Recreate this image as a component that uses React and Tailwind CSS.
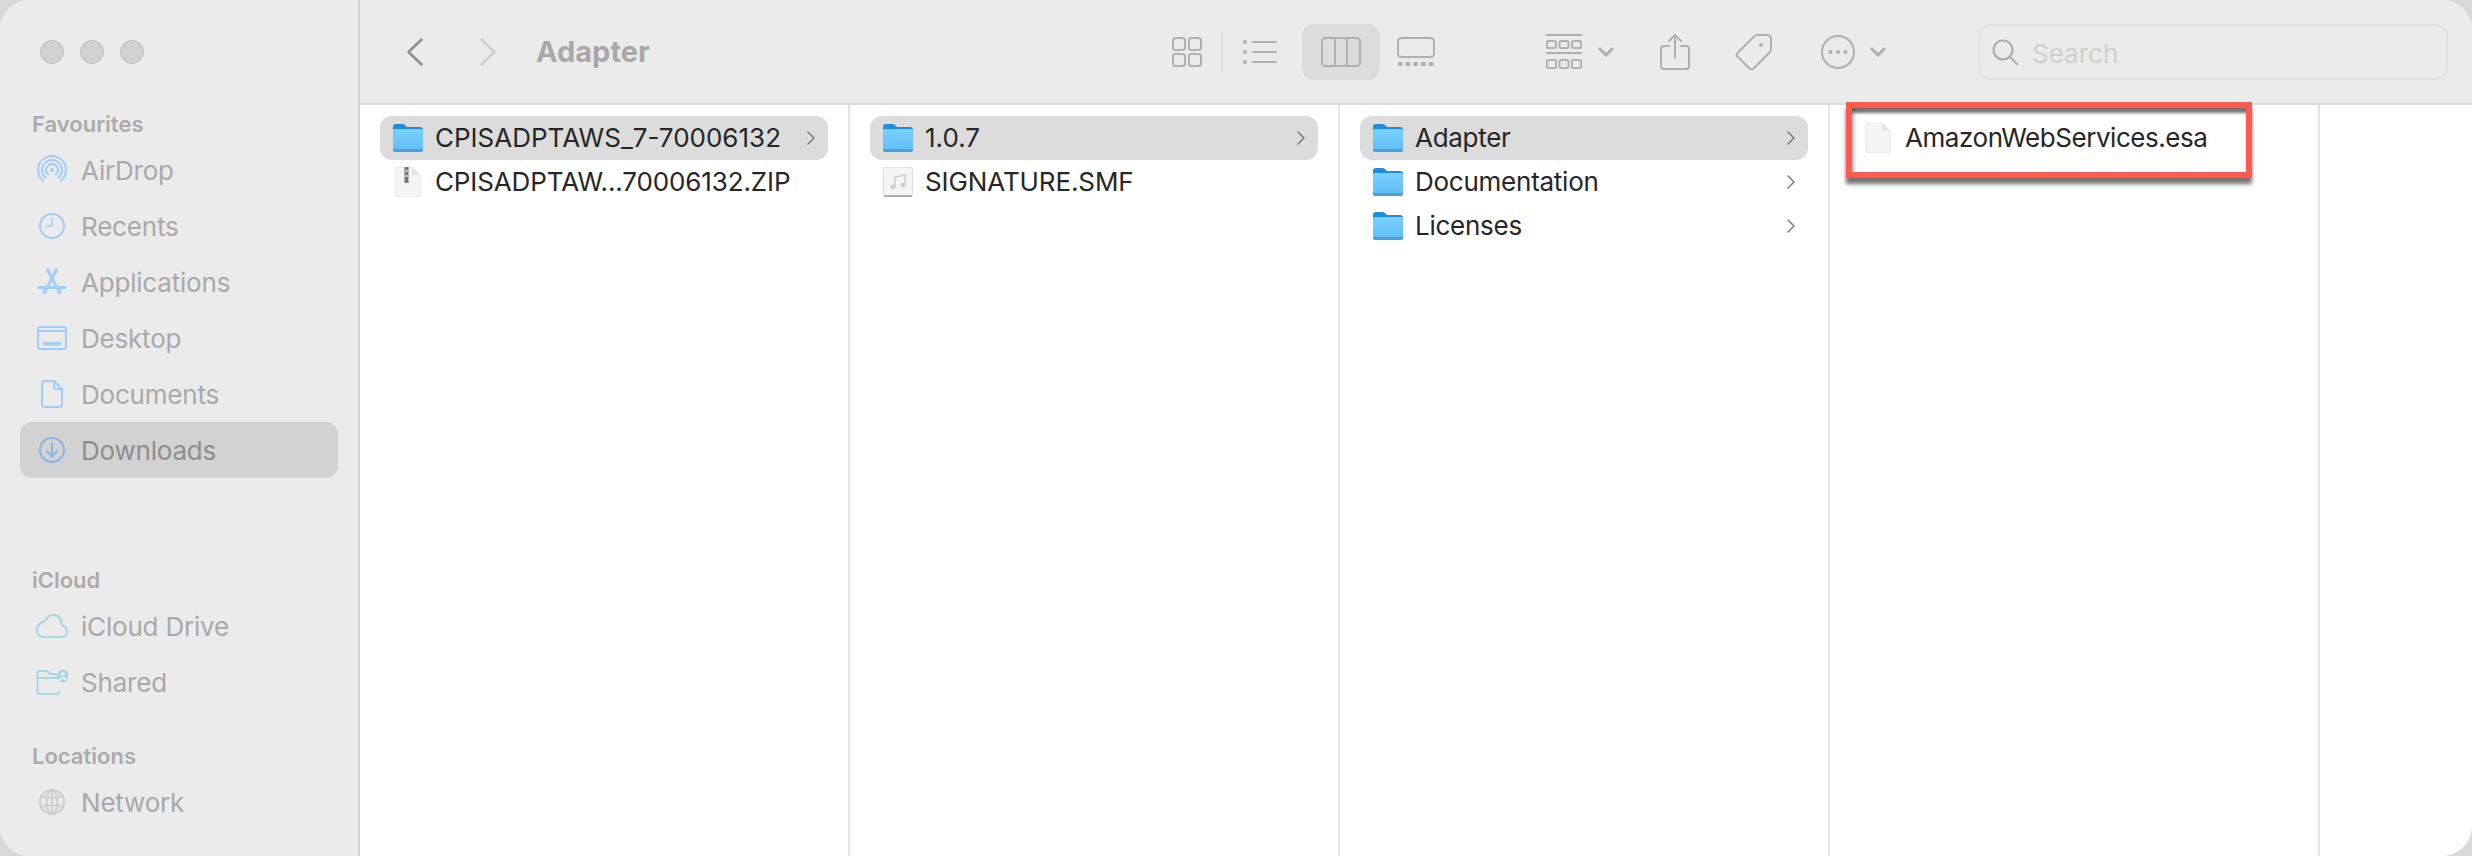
const font = { fontFamily: "Inter, 'Noto Sans', sans-serif" };

const Icon = ({ w = 32, h = 32, children, className = "", stroke = "currentColor", sw = 2 }) => (
  <svg width={w} height={h} viewBox={`0 0 ${w} ${h}`} fill="none" stroke={stroke} strokeWidth={sw} strokeLinecap="round" strokeLinejoin="round" className={`shrink-0 ${className}`}>
    {children}
  </svg>
);

const sidebarIcons = {
  airdrop: (
    <>
      <path d="M7 26.7A14 14 0 1 1 25 26.7" />
      <path d="M9.6 23.7A10 10 0 1 1 22.4 23.7" />
      <path d="M12.1 20.6A6 6 0 1 1 19.9 20.6" />
      <circle cx="16" cy="16" r="2" fill="currentColor" stroke="none" />
    </>
  ),
  recents: (
    <>
      <circle cx="16" cy="16" r="12" />
      <path d="M16 8.5V16H10" strokeWidth="1.5" />
    </>
  ),
  apps: (
    <>
      <path d="M11.5 3.5L23 25.5" strokeWidth="3" />
      <path d="M20.5 3.5L9 25.5" strokeWidth="3" />
      <path d="M3 21.5H29" strokeWidth="3" />
      <circle cx="8.5" cy="26" r="2" fill="currentColor" stroke="none" />
      <circle cx="23.5" cy="26" r="2" fill="currentColor" stroke="none" />
    </>
  ),
  desktop: (
    <>
      <rect x="2" y="5" width="28" height="22" rx="3" />
      <path d="M2 9H30" />
      <rect x="7" y="20" width="18" height="3.5" fill="currentColor" stroke="none" />
    </>
  ),
  documents: (
    <>
      <path d="M9 3H18L26 11V26Q26 29 23 29H9Q6 29 6 26V6Q6 3 9 3Z" />
      <path d="M18 3V9Q18 11 20 11H26" />
    </>
  ),
  downloads: (
    <>
      <circle cx="16" cy="16" r="12" />
      <path d="M16 9.5V22M11 17.5L16 22.5L21 17.5" />
    </>
  ),
  cloud: (
    <>
      <path d="M8 27H25Q31 27 31 21.5Q31 16.5 26 15.5Q25.5 5 17 5Q11.5 5 9.5 11Q1 13 1 20.5Q1 27 8 27Z" />
    </>
  ),
  shared: (
    <>
      <path d="M23 25.5V26Q23 28 21 28H3.5Q1.5 28 1.5 26V7Q1.5 5 3.5 5H10Q11 5 12 6L14 8H20M1.5 12H20" />
      <circle cx="27" cy="10" r="6.5" fill="currentColor" stroke="none" />
      <circle cx="27" cy="8" r="2" fill="#ebebeb" stroke="none" />
      <path d="M23.5 14Q27 10 30.5 14" stroke="#ebebeb" />
    </>
  ),
  network: (
    <>
      <circle cx="16" cy="16" r="12" />
      <ellipse cx="16" cy="16" rx="5.5" ry="12" />
      <path d="M5.5 10Q16 14 26.5 10M5 21Q16 17 27 21M16 4V28" />
    </>
  ),
};

const SidebarRow = ({ icon, label, selected, tint = "text-[#a3cdf9]" }) => (
  <div className={`flex h-[56px] items-center gap-[13px] rounded-[12px] pl-[16px] text-[26px] tracking-[-0.2px] ${selected ? "bg-[#d2d2d2] text-[#8e8e8e]" : "text-[#a9a9a9]"}`}>
    <Icon className={selected ? "text-[#80b7ee]" : tint}>{sidebarIcons[icon]}</Icon>
    <span>{label}</span>
  </div>
);

const SectionTitle = ({ children, className = "" }) => (
  <div className={`flex h-[36px] items-center pl-[12px] text-[22px] font-semibold text-[#ababab] ${className}`}>{children}</div>
);

function Sidebar() {
  return (
    <aside className="flex w-[360px] shrink-0 flex-col border-r-2 border-[#d4d4d4] bg-[#ebebeb] px-[20px]">
      <div className="mt-[40px] flex gap-[16px] pl-[20px]">
        <span className="h-[24px] w-[24px] rounded-full border border-[#bdbdbd] bg-[#d2d2d2]" />
        <span className="h-[24px] w-[24px] rounded-full border border-[#bdbdbd] bg-[#d2d2d2]" />
        <span className="h-[24px] w-[24px] rounded-full border border-[#bdbdbd] bg-[#d2d2d2]" />
      </div>
      <SectionTitle className="mt-[42px]">Favourites</SectionTitle>
      <SidebarRow icon="airdrop" label="AirDrop" />
      <SidebarRow icon="recents" label="Recents" />
      <SidebarRow icon="apps" label="Applications" />
      <SidebarRow icon="desktop" label="Desktop" />
      <SidebarRow icon="documents" label="Documents" />
      <SidebarRow icon="downloads" label="Downloads" selected />
      <SectionTitle className="mt-[84px]">iCloud</SectionTitle>
      <SidebarRow icon="cloud" label="iCloud Drive" tint="text-[#a5d8e2]" />
      <SidebarRow icon="shared" label="Shared" tint="text-[#a5d8e2]" />
      <SectionTitle className="mt-[28px]">Locations</SectionTitle>
      <SidebarRow icon="network" label="Network" tint="text-[#cfcfcf]" />
    </aside>
  );
}

const SmallChevron = ({ className = "" }) => (
  <Icon w={16} h={10} sw={3} className={className}>
    <path d="M2 2L8 8L14 2" />
  </Icon>
);

function Toolbar() {
  return (
    <header className="flex h-[105px] shrink-0 items-center border-b-2 border-[#dcdcdc] bg-[#ebebeb] pr-[24px] text-[#b0b0b0]">
      <Icon w={16} h={28} sw={2.5} className="ml-[47px] text-[#8f8f8f]">
        <path d="M14.5 1.5L1.5 14L14.5 26.5" />
      </Icon>
      <Icon w={16} h={28} sw={2.5} className="ml-[57px] text-[#cfcfcf]">
        <path d="M1.5 1.5L14.5 14L1.5 26.5" />
      </Icon>
      <span className="ml-[40px] text-[29px] font-bold text-[#a8a8a8]">Adapter</span>

      <div className="ml-auto flex items-center">
        <Icon w={30} h={30}>
          <rect x="1" y="1" width="12" height="12" rx="2.5" />
          <rect x="17" y="1" width="12" height="12" rx="2.5" />
          <rect x="1" y="17" width="12" height="12" rx="2.5" />
          <rect x="17" y="17" width="12" height="12" rx="2.5" />
        </Icon>
        <span className="ml-[19px] h-[40px] w-[2px] bg-[#dcdcdc]" />
        <Icon w={34} h={24} className="ml-[20px]">
          <circle cx="2" cy="2" r="2" fill="currentColor" stroke="none" />
          <circle cx="2" cy="12" r="2" fill="currentColor" stroke="none" />
          <circle cx="2" cy="22" r="2" fill="currentColor" stroke="none" />
          <path d="M10 2H33M10 12H33M10 22H33" />
        </Icon>
        <div className="ml-[25px] flex h-[56px] w-[78px] items-center justify-center rounded-[12px] bg-[#dcdcdc]">
          <Icon w={40} h={30}>
            <rect x="1" y="1" width="38" height="28" rx="3.5" />
            <path d="M14 1V29M26 1V29" />
          </Icon>
        </div>
        <Icon w={38} h={30} className="ml-[17px]">
          <rect x="1" y="1" width="36" height="19" rx="3.5" />
          <path d="M1 27H37" strokeWidth="4" strokeDasharray="4.5 3.2" strokeLinecap="butt" />
        </Icon>

        <Icon w={36} h={36} className="ml-[111px]">
          <path d="M0 1H36M0 19H36" />
          <rect x="1" y="7" width="9" height="7" rx="1.5" />
          <rect x="13.5" y="7" width="9" height="7" rx="1.5" />
          <rect x="26" y="7" width="9" height="7" rx="1.5" />
          <rect x="1" y="26" width="9" height="8" rx="1.5" />
          <rect x="13.5" y="26" width="9" height="8" rx="1.5" />
          <rect x="26" y="26" width="9" height="8" rx="1.5" />
        </Icon>
        <SmallChevron className="ml-[16px]" />
        <Icon w={30} h={38} className="ml-[46px]">
          <path d="M9 13H4Q1 13 1 16V33Q1 36 4 36H26Q29 36 29 33V16Q29 13 26 13H21" />
          <path d="M15 25V2M9 8L15 2L21 8" />
        </Icon>
        <Icon w={38} h={38} className="ml-[45px]">
          <path d="M2.5 20L19 3.5Q20.5 2 22.5 2H32Q36 2 36 6V16Q36 18 34.5 19.5L18.5 35.5Q16.5 37 14.5 35.5L2.5 23.5Q1 22 2.5 20Z" />
          <circle cx="26" cy="12" r="2" fill="currentColor" stroke="none" />
        </Icon>
        <Icon w={34} h={34} className="ml-[48px]">
          <circle cx="17" cy="17" r="16" />
          <circle cx="9.5" cy="17" r="2" fill="currentColor" stroke="none" />
          <circle cx="17" cy="17" r="2" fill="currentColor" stroke="none" />
          <circle cx="24.5" cy="17" r="2" fill="currentColor" stroke="none" />
        </Icon>
        <SmallChevron className="ml-[15px]" />

        <div className="ml-[92px] flex h-[56px] w-[470px] items-center rounded-[12px] border-2 border-[#e2e2e2] pl-[12px]">
          <Icon w={26} h={26} className="text-[#aaaaaa]">
            <circle cx="11" cy="11" r="9.5" />
            <path d="M18 18L25 25" />
          </Icon>
          <span className="ml-[14px] mt-[4px] text-[26px] text-[#d0d0d0]">Search</span>
        </div>
      </div>
    </header>
  );
}

const FolderIcon = () => (
  <svg width="30" height="28" viewBox="0 0 30 28" className="shrink-0">
    <defs>
      <linearGradient id="folderFront" x1="0" y1="0" x2="0" y2="1">
        <stop offset="0" stopColor="#7ed0fd" />
        <stop offset="1" stopColor="#5dbdf8" />
      </linearGradient>
    </defs>
    <path d="M0 3Q0 0 3 0H9Q11 0 12 1L14 3H27Q30 3 30 6V10H0Z" fill="#1b8fdd" />
    <rect x="0" y="5" width="30" height="22" rx="2" fill="url(#folderFront)" />
    <path d="M0 25H30V26Q30 28 28 28H2Q0 28 0 26Z" fill="#5d9ac8" />
  </svg>
);

const ZipIcon = () => (
  <svg width="30" height="30" viewBox="0 0 30 30" className="shrink-0">
    <path d="M3 0H19L27 8V28Q27 30 25 30H5Q3 30 3 28Z" fill="#f5f5f5" stroke="#e2e2e2" />
    <path d="M19 0V8H27Z" fill="#e4e4e4" />
    <rect x="11.5" y="0" width="4" height="16" fill="#777777" />
    <rect x="12.5" y="3" width="2" height="2" fill="#dddddd" />
    <rect x="12.5" y="8" width="2" height="2" fill="#dddddd" />
  </svg>
);

const AudioIcon = () => (
  <svg width="30" height="30" viewBox="0 0 30 30" className="shrink-0">
    <rect x="0.5" y="0.5" width="29" height="29" rx="2" fill="#f4f4f4" stroke="#e0e0e0" />
    <path d="M1 29H29" stroke="#9a9a9a" strokeWidth="1.5" />
    <path d="M12 20V10L22 8V18" fill="none" stroke="#cfcfcf" strokeWidth="1.5" />
    <circle cx="10" cy="20" r="2.5" fill="#cfcfcf" />
    <circle cx="20" cy="18" r="2.5" fill="#cfcfcf" />
  </svg>
);

const FileIcon = () => (
  <svg width="30" height="30" viewBox="0 0 30 30" className="shrink-0">
    <path d="M3 0H19L27 8V28Q27 30 25 30H5Q3 30 3 28Z" fill="#f5f5f5" stroke="#e4e4e4" />
    <path d="M19 0V8H27Z" fill="#e6e6e6" />
  </svg>
);

const iconFor = { folder: <FolderIcon />, zip: <ZipIcon />, audio: <AudioIcon />, file: <FileIcon /> };

const FileRow = ({ type, name, selected, arrow, tracking = "" }) => (
  <div className={`flex h-[44px] items-center rounded-[12px] pl-[13px] pr-[13px] text-[26px] text-[#262626] ${selected ? "bg-[#dcdcdc]" : ""}`}>
    <span className="flex w-[30px] justify-center">{iconFor[type]}</span>
    <span className={`ml-[12px] whitespace-nowrap pb-[2px] ${tracking}`}>{name}</span>
    {arrow && (
      <Icon w={8} h={14} sw={1.5} className="ml-auto text-[#7c7c7c]">
        <path d="M1 1L7 7L1 13" />
      </Icon>
    )}
  </div>
);

const columns = [
  [
    { type: "folder", name: "CPISADPTAWS_7-70006132", selected: true, arrow: true },
    { type: "zip", name: "CPISADPTAW...70006132.ZIP", tracking: "tracking-[-0.12px]" },
  ],
  [
    { type: "folder", name: "1.0.7", selected: true, arrow: true },
    { type: "audio", name: "SIGNATURE.SMF", tracking: "tracking-[-0.1px]" },
  ],
  [
    { type: "folder", name: "Adapter", selected: true, arrow: true, tracking: "tracking-[-0.3px]" },
    { type: "folder", name: "Documentation", arrow: true, tracking: "tracking-[-0.25px]" },
    { type: "folder", name: "Licenses", arrow: true, tracking: "tracking-[-0.25px]" },
  ],
  [{ type: "file", name: "AmazonWebServices.esa", tracking: "tracking-[-0.45px]" }],
];

export default function App() {
  return (
    <div className="h-[856px] w-[2472px] overflow-hidden bg-[#d9d9d9]" style={font}>
      <div className="flex h-full overflow-hidden rounded-[30px] bg-white">
        <Sidebar />
        <main className="flex min-w-0 flex-1 flex-col">
          <Toolbar />
          <div className="relative flex flex-1">
            {columns.map((rows, i) => (
              <div key={i} className="w-[490px] shrink-0 border-r-2 border-[#e4e4e4] px-[20px] pt-[11px]">
                {rows.map((row) => (
                  <FileRow key={row.name} {...row} />
                ))}
              </div>
            ))}
            <div className="absolute left-[1486px] top-[-3px] h-[76px] w-[406px] border-[6px] border-[#fb5a4e] shadow-[inset_0_6px_3px_-1px_rgba(0,0,0,0.55),inset_5px_0_3px_-2px_rgba(0,0,0,0.2),0_6px_4px_rgba(0,0,0,0.55)]" />
          </div>
        </main>
      </div>
    </div>
  );
}
